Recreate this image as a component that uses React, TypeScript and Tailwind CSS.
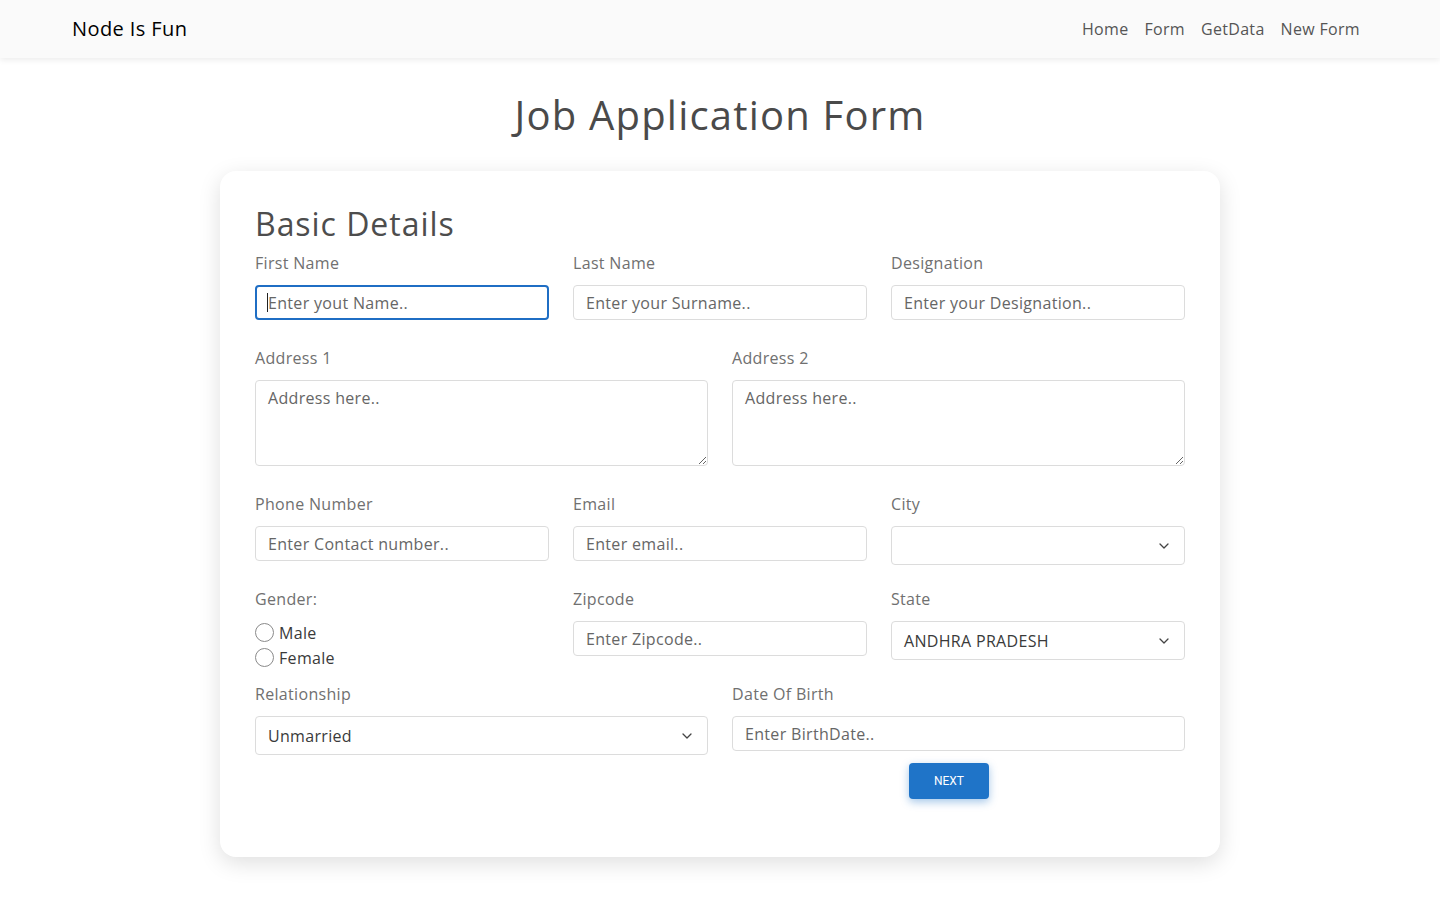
import React from "react";

const font = { fontFamily: '"Open Sans", "Liberation Sans", sans-serif' };

function Label({ children }: { children: React.ReactNode }) {
  return <div className="text-[16px] tracking-[0.02em] leading-6 text-[#707070] mb-[10px]">{children}</div>;
}

function TextInput({ placeholder }: { placeholder: string }) {
  return (
    <input
      readOnly
      placeholder={placeholder}
      className="block w-full h-[35px] rounded-[4px] border border-[#dcdcdc] bg-white px-3 text-[16px] tracking-[0.02em] text-[#444] placeholder:text-[#666] outline-none"
      style={font}
    />
  );
}

function Chevron() {
  return (
    <svg width="10" height="6" viewBox="0 0 10 6" fill="none">
      <path d="M1 1l4 4 4-4" stroke="#444" strokeWidth="1.3" strokeLinecap="round" strokeLinejoin="round" />
    </svg>
  );
}

function Select({ value }: { value: string }) {
  return (
    <div className="flex h-[39px] items-center justify-between rounded-[4px] border border-[#dcdcdc] bg-white pl-3 pr-[15px] text-[16px] tracking-[0.02em] text-[#3a3a3a]">
      <span>{value}</span>
      <Chevron />
    </div>
  );
}

function TextArea() {
  return (
    <textarea
      readOnly
      placeholder="Address here.."
      className="block w-full h-[86px] rounded-[4px] border border-[#dcdcdc] bg-white px-3 py-[5px] text-[16px] tracking-[0.02em] leading-6 placeholder:text-[#666] outline-none"
      style={font}
    />
  );
}

function Radio({ label }: { label: string }) {
  return (
    <div className="flex items-center h-[25px]">
      <span className="inline-block w-[19px] h-[19px] rounded-full border border-[#8a8a8a] bg-white" />
      <span className="ml-[5px] text-[16px] tracking-[0.02em] text-[#3a3a3a]">{label}</span>
    </div>
  );
}

export default function App() {
  return (
    <div className="min-h-[900px] bg-white" style={font}>
      <nav className="h-[58px] bg-[#fafafa] shadow-[0_2px_6px_rgba(0,0,0,0.08)] relative z-10">
        <div className="mx-auto flex h-full w-[1320px] items-center justify-between px-3">
          <span className="text-[20px] tracking-[0.02em] text-black">Node Is Fun</span>
          <div className="flex items-center text-[16px] tracking-[0.02em] text-[#555]">
            <span className="px-2">Home</span>
            <span className="px-2">Form</span>
            <span className="px-2">GetData</span>
            <span className="px-2">New Form</span>
          </div>
        </div>
      </nav>

      <h1 className="mt-[33px] text-center text-[40px] tracking-[0.03em] leading-[48px] text-[#4a4a4a]">Job Application Form</h1>

      <div className="mx-auto mt-[32px] w-[1000px] rounded-[16px] bg-white px-[35px] pt-[34px] pb-[58px] shadow-[0_6px_22px_rgba(0,0,0,0.13)]">
        <h2 className="text-[32px] tracking-[0.03em] leading-[38px] text-[#4d4d4d] mb-[8px]">Basic Details</h2>

        <div className="grid grid-cols-3 gap-x-6">
          <div>
            <Label>First Name</Label>
            <div className="relative">
              <input
                readOnly
                placeholder="Enter yout Name.."
                className="block w-full h-[35px] rounded-[4px] border-2 border-[#1f6ec4] bg-white px-[11px] text-[16px] tracking-[0.02em] placeholder:text-[#666] outline-none"
                style={font}
              />
              <span className="absolute left-[12px] top-[8px] h-[19px] w-px bg-[#222]" />
            </div>
          </div>
          <div>
            <Label>Last Name</Label>
            <TextInput placeholder="Enter your Surname.." />
          </div>
          <div>
            <Label>Designation</Label>
            <TextInput placeholder="Enter your Designation.." />
          </div>
        </div>

        <div className="mt-[26px] grid grid-cols-2 gap-x-6">
          <div>
            <Label>Address 1</Label>
            <TextArea />
          </div>
          <div>
            <Label>Address 2</Label>
            <TextArea />
          </div>
        </div>

        <div className="mt-[26px] grid grid-cols-3 gap-x-6">
          <div>
            <Label>Phone Number</Label>
            <TextInput placeholder="Enter Contact number.." />
          </div>
          <div>
            <Label>Email</Label>
            <TextInput placeholder="Enter email.." />
          </div>
          <div>
            <Label>City</Label>
            <Select value="" />
          </div>
        </div>

        <div className="mt-[22px] grid grid-cols-3 gap-x-6">
          <div>
            <Label>Gender:</Label>
            <div className="-mt-[1px]">
              <Radio label="Male" />
              <Radio label="Female" />
            </div>
          </div>
          <div>
            <Label>Zipcode</Label>
            <TextInput placeholder="Enter Zipcode.." />
          </div>
          <div>
            <Label>State</Label>
            <Select value="ANDHRA PRADESH" />
          </div>
        </div>

        <div className="mt-[12px] grid grid-cols-2 gap-x-6">
          <div>
            <Label>Relationship</Label>
            <Select value="Unmarried" />
          </div>
          <div>
            <Label>Date Of Birth</Label>
            <TextInput placeholder="Enter BirthDate.." />
            <div className="mt-[12px] pl-[177px]">
              <button
                className="h-[36px] w-[80px] rounded-[4px] bg-[#1f74c8] text-[12px] text-white shadow-[0_3px_8px_rgba(31,116,200,0.4)]"
                style={{ fontFamily: '"Roboto", "Liberation Sans", sans-serif' }}
              >
                NEXT
              </button>
            </div>
          </div>
        </div>
      </div>
    </div>
  );
}
